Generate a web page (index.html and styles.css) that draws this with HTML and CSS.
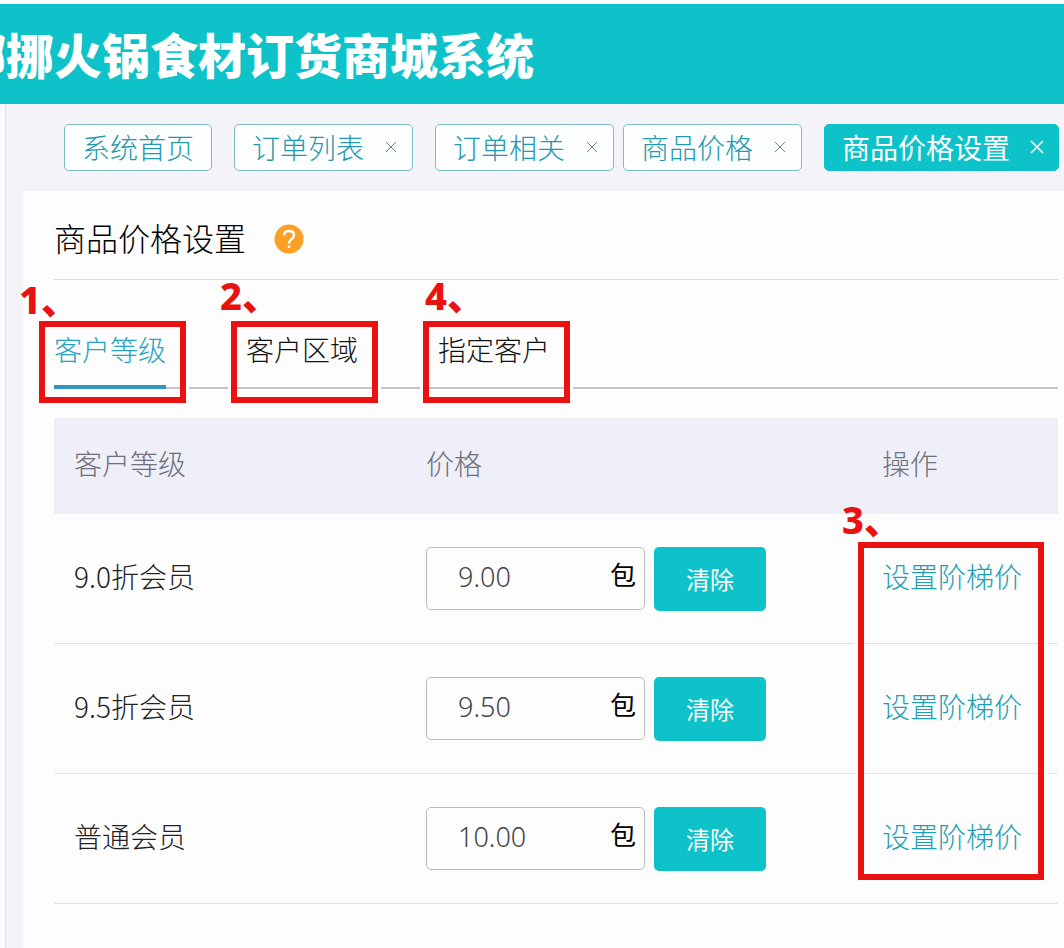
FILE: index.html
```
<!DOCTYPE html>
<html lang="zh-CN">
<head>
    <meta charset="UTF-8">
    <meta name="viewport" content="width=device-width, initial-scale=1.0">
    <title>商品价格设置</title>
    <link rel="stylesheet" href="styles.css">
</head>
<body>
    <header class="header">
        <h1 class="brand">挪挪火锅食材订货商城系统</h1>
    </header>

    <div class="layout">
        <div class="sidebar-edge"></div>
        <div class="main">
            <nav class="page-tabs">
                <button type="button" class="page-tab">系统首页</button>
                <button type="button" class="page-tab">订单列表<svg class="close" viewBox="0 0 14 14"><path d="M2 2l10 10M12 2L2 12"/></svg></button>
                <div class="tab-group">
                    <button type="button" class="page-tab">订单相关<svg class="close" viewBox="0 0 14 14"><path d="M2 2l10 10M12 2L2 12"/></svg></button>
                    <button type="button" class="page-tab">商品价格<svg class="close" viewBox="0 0 14 14"><path d="M2 2l10 10M12 2L2 12"/></svg></button>
                </div>
                <button type="button" class="page-tab active">商品价格设置<svg class="close" viewBox="0 0 14 14"><path d="M1 1l12 12M13 1L1 13"/></svg></button>
            </nav>

            <main class="panel">
                <div class="panel-title">
                    <h2>商品价格设置</h2>
                    <svg class="help" viewBox="0 0 30 30">
                        <circle cx="15" cy="15" r="14.5"/>
                        <path d="M10 11.5c0-3 2.200-4.500 5-4.500s5 1.500 5 4.200c0 3.600-5 3.800-5 8.300M15 21.500v2.500"/>
                    </svg>
                </div>

                <div class="sub-tabs">
                    <div class="sub-tab-item">
                        <button type="button" class="sub-tab active">客户等级</button>
                        <span class="mark"></span>
                        <span class="mark-num">1、</span>
                    </div>
                    <div class="sub-tab-item">
                        <button type="button" class="sub-tab">客户区域</button>
                        <span class="mark"></span>
                        <span class="mark-num mark-num-area">2、</span>
                    </div>
                    <div class="sub-tab-item">
                        <button type="button" class="sub-tab">指定客户</button>
                        <span class="mark"></span>
                        <span class="mark-num mark-num-customer">4、</span>
                    </div>
                </div>

                <div class="table-wrap">
                    <span class="mark mark-column"></span>
                    <span class="mark-num mark-num-column">3、</span>
                    <table class="price-table">
                        <thead>
                            <tr>
                                <th class="col-level">客户等级</th>
                                <th class="col-price">价格</th>
                                <th>操作</th>
                            </tr>
                        </thead>
                        <tbody>
                            <tr>
                                <td class="text-cell"><label for="price-90">9.0折会员</label></td>
                                <td>
                                    <div class="price-cell">
                                        <div class="price-box"><input type="text" id="price-90" value="9.00"><span>包</span></div>
                                        <button type="button" class="clear">清除</button>
                                    </div>
                                </td>
                                <td class="text-cell"><a href="#">设置阶梯价</a></td>
                            </tr>
                            <tr>
                                <td class="text-cell"><label for="price-95">9.5折会员</label></td>
                                <td>
                                    <div class="price-cell">
                                        <div class="price-box"><input type="text" id="price-95" value="9.50"><span>包</span></div>
                                        <button type="button" class="clear">清除</button>
                                    </div>
                                </td>
                                <td class="text-cell"><a href="#">设置阶梯价</a></td>
                            </tr>
                            <tr>
                                <td class="text-cell"><label for="price-100">普通会员</label></td>
                                <td>
                                    <div class="price-cell">
                                        <div class="price-box"><input type="text" id="price-100" value="10.00"><span>包</span></div>
                                        <button type="button" class="clear">清除</button>
                                    </div>
                                </td>
                                <td class="text-cell"><a href="#">设置阶梯价</a></td>
                            </tr>
                        </tbody>
                    </table>
                </div>
            </main>
        </div>
    </div>
</body>
</html>
```
FILE: styles.css
```
* {
    box-sizing: border-box;
}

body {
    margin: 0;
    min-height: 100vh;
    display: flex;
    flex-direction: column;
    overflow-x: hidden;
    background-color: #fdfdfe;
    font-family: "Noto Sans CJK SC", sans-serif;
    font-size: 28px;
    font-weight: 300;
    line-height: 40px;
    color: #222;
}

button,
input {
    font: inherit;
}

/* header */
.header {
    margin-top: 4px;
    height: 100px;
    display: flex;
    align-items: center;
    background-color: #0ec2c9;
    overflow: hidden;
}

/* the start of the name runs off the left edge */
.brand {
    margin: 0 0 0 -42px;
    padding-bottom: 2px;
    font-size: 48px;
    font-weight: 900;
    line-height: 60px;
    color: #fff;
    white-space: nowrap;
}

.layout {
    flex: 1;
    display: flex;
    background-color: #f4f4f8;
}

.sidebar-edge {
    width: 6px;
    flex: none;
    background-color: #fafafc;
    border-right: 1px solid #e2e2e6;
}

.main {
    flex: 1;
    min-width: 0;
    display: flex;
    flex-direction: column;
    padding-left: 17px;
}

/* opened pages */
.page-tabs {
    display: flex;
    align-items: center;
    gap: 22px;
    height: 87px;
    padding-left: 41px;
}

.tab-group {
    display: flex;
    gap: 9px;
}

.page-tab {
    flex: none;
    display: flex;
    align-items: center;
    gap: 20px;
    height: 47px;
    padding: 0 17px 2px;
    border: 1px solid #7dbcc4;
    border-radius: 5px;
    background-color: #fcfeff;
    color: #2499ab;
    white-space: nowrap;
}

.page-tab .close {
    width: 14px;
    height: 14px;
    margin-right: -3px;
    fill: none;
    stroke: #6f8389;
    stroke-width: 1;
}

.page-tab.active {
    border-color: #0ec2c9;
    background-color: #0ec2c9;
    color: #fff;
    font-weight: 400;
}

.page-tab.active .close {
    stroke: #fff;
    stroke-width: 1.500;
}

/* panel */
.panel {
    flex: 1;
    padding: 0 6px 0 31px;
    background-color: #fdfdfe;
}

.panel-title {
    display: flex;
    align-items: center;
    gap: 28px;
    height: 89px;
    padding-top: 8px;
    border-bottom: 1px solid #dcdcde;
}

.panel-title h2 {
    margin: 0;
    padding-bottom: 4px;
    font-size: 32px;
    font-weight: 300;
    color: #000;
}

.help {
    width: 30px;
    height: 30px;
}

.help circle {
    fill: #fb9f25;
}

.help path {
    fill: none;
    stroke: #fff;
    stroke-width: 2.500;
}

.sub-tabs {
    display: flex;
    gap: 80px;
    margin-bottom: 29px;
    padding-top: 39px;
    border-bottom: 2px solid #c3c3c8;
}

.sub-tab-item {
    position: relative;
    margin-bottom: -2px;
}

.sub-tab {
    display: block;
    height: 70px;
    padding: 10px 0 16px;
    border: 0;
    border-bottom: 4px solid transparent;
    background: none;
    color: #111;
}

.sub-tab.active {
    border-bottom-color: #2f97bb;
    color: #25a3c0;
}

/* red call-outs */
.mark {
    position: absolute;
    top: 2px;
    left: -15px;
    width: 147px;
    height: 82px;
    border: 6px solid #ea1210;
    outline: 3px solid #fdfdfe;
    pointer-events: none;
}

.mark-num {
    position: absolute;
    top: -44px;
    left: -35px;
    color: #ea1210;
    font-family: "Noto Sans", "Noto Sans CJK SC", sans-serif;
    font-size: 38px;
    font-weight: 800;
    line-height: 48px;
    white-space: nowrap;
}

.mark-num-area {
    top: -48px;
    left: -26px;
}

.mark-num-customer {
    top: -48px;
    left: -13px;
}

.mark-column {
    top: 124px;
    left: auto;
    right: 14px;
    width: 186px;
    height: 338px;
}

.mark-num-column {
    top: 77px;
    left: auto;
    right: 156px;
}

/* price table */
.table-wrap {
    position: relative;
}

.price-table {
    width: 100%;
    border-collapse: separate;
    border-spacing: 0;
    table-layout: fixed;
}

.price-table th,
.price-table td {
    padding: 0 0 0 20px;
    text-align: left;
    font-weight: 300;
}

.price-table th {
    height: 96px;
    padding-bottom: 6px;
    background-color: #eeeff8;
    color: #6e7079;
}

.price-table td {
    height: 130px;
    border-bottom: 1px solid #e4e0e4;
}

.price-table .text-cell {
    padding-bottom: 6px;
}

.col-level {
    width: 352px;
}

.col-price {
    width: 456px;
}

.price-table a {
    color: #1f9fb2;
    text-decoration: none;
}

.price-cell {
    display: flex;
    align-items: center;
    gap: 9px;
}

.price-box {
    display: flex;
    align-items: center;
    width: 219px;
    height: 63px;
    padding: 0 8px 0 31px;
    border: 1px solid #bcbcc0;
    border-radius: 5px;
    color: #000;
}

.price-box input {
    flex: 1;
    min-width: 0;
    padding: 0 0 4px;
    border: 0;
    outline: 0;
    background: none;
    color: #444;
    font-family: "Noto Sans", sans-serif;
    font-size: 27px;
}

.price-box span {
    padding-bottom: 10px;
    font-size: 26px;
    font-weight: 400;
}

.clear {
    width: 112px;
    height: 64px;
    padding: 0;
    border: 0;
    border-radius: 5px;
    background-color: #0ec2c9;
    color: #fff;
    font-size: 24px;
    font-weight: 400;
}
```
